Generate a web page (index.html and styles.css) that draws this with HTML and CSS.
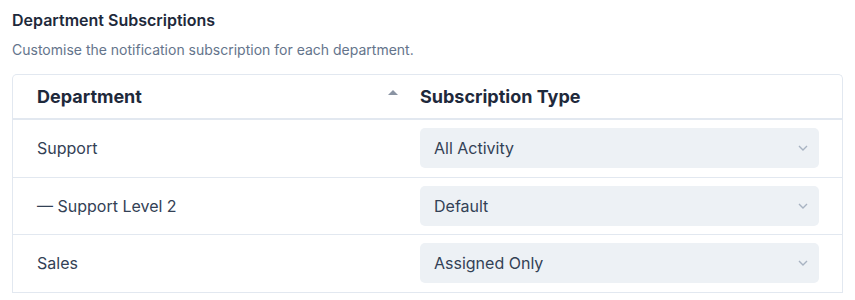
FILE: index.html
```html
<!DOCTYPE html>
<html>
<head>
<meta charset="utf-8">
<link rel="stylesheet" href="styles.css">
</head>
<body>
<section class="panel">
  <h2 class="title">Department Subscriptions</h2>
  <p class="subtitle">Customise the notification subscription for each department.</p>
  <div class="table">
    <div class="row head">
      <div class="cell c1">Department<span class="sort"></span></div>
      <div class="cell c2">Subscription Type</div>
    </div>
    <div class="row">
      <div class="cell c1">Support</div>
      <div class="cell c2"><div class="select">All Activity<svg class="chev" width="10" height="6" viewBox="0 0 10 6"><path d="M1 1l4 4 4-4" fill="none" stroke="#a8b3c2" stroke-width="1.4"/></svg></div></div>
    </div>
    <div class="row">
      <div class="cell c1">— Support Level 2</div>
      <div class="cell c2"><div class="select">Default<svg class="chev" width="10" height="6" viewBox="0 0 10 6"><path d="M1 1l4 4 4-4" fill="none" stroke="#a8b3c2" stroke-width="1.4"/></svg></div></div>
    </div>
    <div class="row">
      <div class="cell c1">Sales</div>
      <div class="cell c2"><div class="select">Assigned Only<svg class="chev" width="10" height="6" viewBox="0 0 10 6"><path d="M1 1l4 4 4-4" fill="none" stroke="#a8b3c2" stroke-width="1.4"/></svg></div></div>
    </div>
  </div>
</section>
</body>
</html>
```
FILE: styles.css
```css
html, body { margin: 0; padding: 0; background: #fff; }
body { font-family: Inter, "Noto Sans", sans-serif; color: #1e293b; }
.panel { padding: 10px 12px 0 12px; }
.title { margin: 0; font-size: 16px; font-weight: 600; line-height: 20px; color: #1e293b; }
.subtitle { margin: 11px 0 0 0; font-size: 14px; line-height: 18px; color: #64748b; }
.table { margin-top: 15px; border: 1px solid #e2e8f0; border-bottom: none; border-radius: 5px 5px 0 0; }
.row { display: grid; grid-template-columns: 395px 1fr; border-bottom: 1px solid #e2e8f0; height: 57.5px; box-sizing: border-box; align-items: center; }
.row.head { height: 45px; border-bottom: 2px solid #e2e8f0; }
.cell { font-size: 16px; color: #334155; }
.head .cell { font-size: 18px; font-weight: 700; color: #1e293b; }
.c1 { padding-left: 24px; display: flex; align-items: center; justify-content: space-between; padding-right: 10px; }
.c2 { padding-left: 12px; padding-right: 23px; }
.sort { width: 0; height: 0; border-left: 5.5px solid transparent; border-right: 5.5px solid transparent; border-bottom: 5px solid #8a94a3; margin-top: -8px; }
.select { height: 40px; background: #edf1f5; border-radius: 5px; display: flex; align-items: center; justify-content: space-between; padding: 0 11px 0 14px; font-size: 16px; color: #334155; }
.chev { display: block; }
```
